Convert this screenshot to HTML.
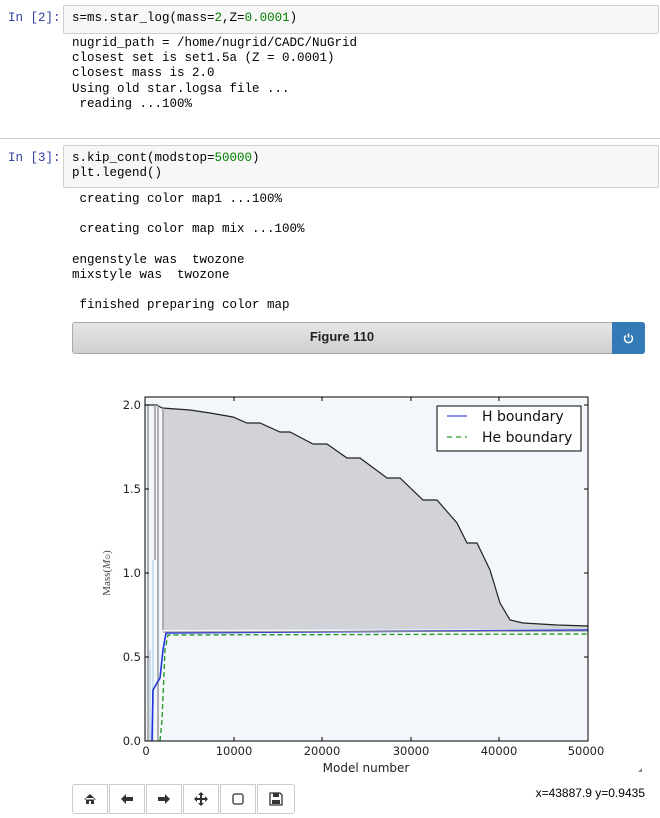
<!DOCTYPE html>
<html><head><meta charset="utf-8"><style>
body{margin:0;width:660px;height:818px;background:#fff;position:relative;overflow:hidden;font-family:"Liberation Sans",sans-serif}
.mono{font-family:"Liberation Mono",monospace;font-size:12.5px;position:absolute;white-space:pre;color:#000}
.prompt{color:#303f9f;}
.inp{position:absolute;left:63px;width:594px;background:#f7f7f7;border:1px solid #cfcfcf;border-radius:2px}
.g{color:#008000}
.btn{position:absolute;top:784px;width:36px;height:30px;border:1px solid #ccc;background:#fff;box-sizing:border-box;display:flex;align-items:center;justify-content:center}
</style></head><body>
<div class="mono prompt" style="left:8px;top:11px">In [2]:</div>
<div class="inp" style="top:5px;height:27px"></div>
<div class="mono" style="left:72px;top:11px">s=ms.star_log(mass=<span class="g">2</span>,Z=<span class="g">0.0001</span>)</div>
<div class="mono" style="left:72px;top:36px;line-height:15.2px">nugrid_path = /home/nugrid/CADC/NuGrid
closest set is set1.5a (Z = 0.0001)
closest mass is 2.0
Using old star.logsa file ...
 reading ...100%</div>
<div style="position:absolute;left:0;top:138px;width:660px;height:1px;background:#ccc"></div>
<div class="mono prompt" style="left:8px;top:151px">In [3]:</div>
<div class="inp" style="top:145px;height:41px"></div>
<div class="mono" style="left:72px;top:151px;line-height:15px">s.kip_cont(modstop=<span class="g">50000</span>)
plt.legend()</div>
<div class="mono" style="left:72px;top:192px;line-height:15.2px"> creating color map1 ...100%

 creating color map mix ...100%

engenstyle was  twozone
mixstyle was  twozone

 finished preparing color map</div>
<div style="position:absolute;left:72px;top:322px;width:573px;height:32px;box-sizing:border-box;border:1px solid #aaa;border-radius:3px;background:linear-gradient(#e6e6e6,#cfcfcf)"></div>
<div style="position:absolute;left:72px;top:329px;width:540px;text-align:center;font-size:13px;font-weight:bold;color:#222">Figure 110</div>
<div style="position:absolute;left:612px;top:322px;width:33px;height:32px;background:#337ab7;border-radius:0 3px 3px 0"><svg width="33" height="32"><path d="M14 13.5a4 4 0 1 0 5 0" stroke="#fff" stroke-width="1.5" fill="none"/><path d="M16.5 11.5v4" stroke="#fff" stroke-width="1.5"/></svg></div>
<svg style="position:absolute;left:0;top:380px" width="660" height="400" viewBox="0 380 660 400" font-family="DejaVu Sans, sans-serif">
<rect x="145" y="397" width="443" height="344" fill="#f3f7fb"/>
<path d="M163 408 L190 410 L210 413 L233 417 L247 423 L260 423 L280 432 L290 432 L313 444 L327 444 L347 458 L360 458 L387 478 L400 478 L423 500 L437 500 L457 523 L467 543 L477 543 L490 570 L500 603 L510 620 L523 623 L557 625 L588 626 L588 629 L163 630 Z" fill="#d2d3d8"/>
<path d="M145 405 L157 405 L162 408 L190 410 L210 413 L233 417 L247 423 L260 423 L280 432 L290 432 L313 444 L327 444 L347 458 L360 458 L387 478 L400 478 L423 500 L437 500 L457 523 L467 543 L477 543 L490 570 L500 603 L510 620 L523 623 L557 625 L588 626" fill="none" stroke="#222" stroke-width="1.2"/>
<path d="M148 405 V741 M155 405 V560 M158 405 V741 M163 408 V630" stroke="#999" stroke-width="1.5" fill="none"/>
<path d="M153 560 V741 M150 650 V741" stroke="#bcd8ee" stroke-width="1.5"/>
<path d="M152 741 L153 690 L157 683 L160 678 L163 650 L166 633 L588 630" fill="none" stroke="#2233dd" stroke-width="1.6"/>
<path d="M163 632 L588 631" stroke="#888" stroke-width="1"/>
<path d="M160 741 L162 720 L165 650 L168 635 L588 634" fill="none" stroke="#2a9a2a" stroke-width="1.4" stroke-dasharray="5,3"/>
<rect x="145" y="397" width="443" height="344" fill="none" stroke="#000" stroke-width="1"/>
<g stroke="#000"><path d="M145 405h4M145 489h4M145 573h4M145 657h4M588 405h-4M588 489h-4M588 573h-4M588 657h-4M234 741v-4M322 741v-4M411 741v-4M499 741v-4M234 397v4M322 397v4M411 397v4M499 397v4"/></g>
<g font-size="11.5" fill="#222" text-anchor="end"><text x="141" y="409">2.0</text><text x="141" y="493">1.5</text><text x="141" y="577">1.0</text><text x="141" y="661">0.5</text><text x="141" y="745">0.0</text></g>
<g font-size="11.5" fill="#222" text-anchor="middle"><text x="146" y="755">0</text><text x="234" y="755">10000</text><text x="322" y="755">20000</text><text x="411" y="755">30000</text><text x="499" y="755">40000</text><text x="586" y="755">50000</text><text x="366" y="772" font-size="12">Model number</text></g>
<text transform="translate(110,573) rotate(-90)" text-anchor="middle" font-size="11" fill="#444" font-family="Liberation Serif,serif">Mass(<tspan font-style="italic">M</tspan><tspan font-size="7">⊙</tspan>)</text>
<rect x="437" y="406" width="144" height="45" fill="#fff" stroke="#000"/>
<path d="M447 416h20" stroke="#6666ee" stroke-width="1.5"/><path d="M447 437h20" stroke="#2a9a2a" stroke-width="1.2" stroke-dasharray="5,4"/>
<text x="482" y="421" font-size="14" fill="#111">H boundary</text><text x="482" y="442" font-size="14" fill="#111">He boundary</text>
<path d="M638 772l4-4v4z" fill="#888"/>
</svg>
<div class="btn" style="left:72px;border-radius:3px 0 0 3px"><svg width="14" height="12"><path d="M1 6.5L7 1l6 5.5M3 5v6h3V8h2v3h3V5" fill="#333"/></svg></div>
<div class="btn" style="left:109px"><svg width="14" height="12"><path d="M1 6l5-5v3h7v4H6v3z" fill="#333"/></svg></div>
<div class="btn" style="left:146px"><svg width="14" height="12"><path d="M13 6L8 1v3H1v4h7v3z" fill="#333"/></svg></div>
<div class="btn" style="left:183px"><svg width="14" height="14"><path d="M7 0l3 3H8v3h3V4l3 3-3 3V8H8v3h2l-3 3-3-3h2V8H3v2L0 7l3-3v2h3V3H4z" fill="#333"/></svg></div>
<div class="btn" style="left:220px"><svg width="14" height="14"><rect x="2" y="2" width="10" height="10" rx="2" fill="none" stroke="#333" stroke-width="1.3"/></svg></div>
<div class="btn" style="left:257px;width:38px;border-radius:0 3px 3px 0"><svg width="14" height="14"><path d="M1 1h10l2 2v10H1z" fill="none" stroke="#333" stroke-width="1.3"/><rect x="4" y="1" width="6" height="4" fill="#333"/><rect x="3" y="8" width="8" height="4" fill="#333"/></svg></div>
<div style="position:absolute;right:15px;top:786px;font-size:12px;color:#000">x=43887.9 y=0.9435</div>
</body></html>
